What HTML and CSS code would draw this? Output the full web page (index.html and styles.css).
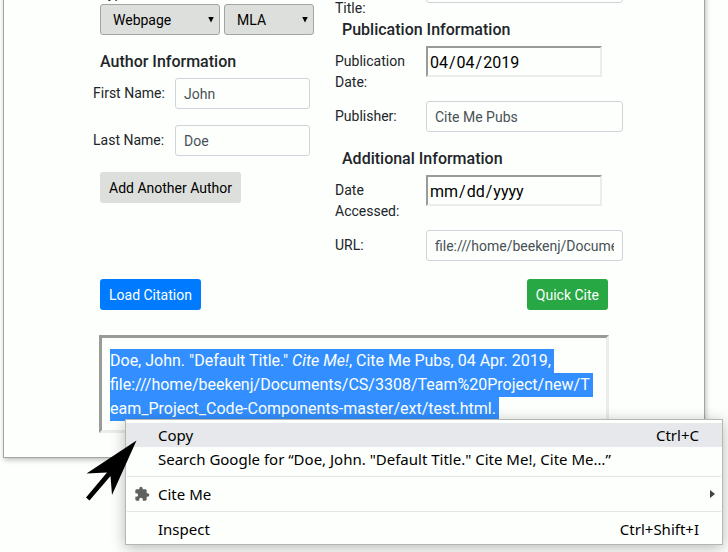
FILE: index.html
```html
<!DOCTYPE html>
<html lang="en">
<head>
<meta charset="utf-8">
<title>Cite Me</title>
<link rel="stylesheet" href="styles.css">
</head>
<body>
<main class="panel">
  <form class="columns">
    <section class="column column-author">
      <label class="type-label" for="type">Type:</label>
      <div class="selects">
        <span class="select select-type"><select id="type"><option>Webpage</option></select></span>
        <span class="select select-style"><select id="style" aria-label="Style"><option>MLA</option></select></span>
      </div>
      <h2 class="heading">Author Information</h2>
      <div class="row"><label for="first">First Name:</label><input class="field" id="first" type="text" value="John"></div>
      <div class="row"><label for="last">Last Name:</label><input class="field" id="last" type="text" value="Doe"></div>
      <button class="button button-light" type="button">Add Another Author</button>
    </section>
    <section class="column column-source">
      <div class="row"><label for="container">Container Title:</label><input class="field" id="container" type="text"></div>
      <h2 class="heading">Publication Information</h2>
      <div class="row row-date"><label for="published">Publication Date:</label><input class="date" id="published" type="date" value="2019-04-04"></div>
      <div class="row"><label for="publisher">Publisher:</label><input class="field" id="publisher" type="text" value="Cite Me Pubs"></div>
      <h2 class="heading">Additional Information</h2>
      <div class="row row-date"><label for="accessed">Date Accessed:</label><input class="date" id="accessed" type="date"></div>
      <div class="row"><label for="url">URL:</label><input class="field" id="url" type="text" value="file:///home/beekenj/Documents/CS/3308/Team%20Project/new/Team_Project_Code-Components-master/ext/test.html"></div>
    </section>
  </form>
  <div class="actions">
    <button class="button button-primary" type="button">Load Citation</button>
    <button class="button button-success" type="button">Quick Cite</button>
  </div>
  <div class="citation"><mark>Doe, John. "Default Title." <i>Cite Me!</i>, Cite Me Pubs, 04 Apr. 2019, file:///home/beekenj/Documents/CS/3308/Team%20Project/new/Team_Project_Code-Components-master/ext/test.html.</mark></div>
</main>

<div class="menu" role="menu">
  <button class="item item-active" type="button" role="menuitem"><span>Copy</span><span>Ctrl+C</span></button>
  <button class="item" type="button" role="menuitem"><span>Search Google for “Doe, John. "Default Title." Cite Me!, Cite Me…”</span></button>
  <hr>
  <button class="item item-icon" type="button" role="menuitem">
    <svg class="puzzle" viewBox="0 0 24 24" aria-hidden="true"><path d="M20.5 11H19V7c0-1.1-.9-2-2-2h-4V3.500a2.500 2.500 0 0 0-5 0V5H4c-1.100 0-2 .9-2 2v3.800h1.500a2.700 2.700 0 0 1 0 5.400H2V20c0 1.100.9 2 2 2h3.800v-1.500a2.700 2.700 0 0 1 5.400 0V22H17c1.100 0 2-.9 2-2v-4h1.500a2.500 2.500 0 0 0 0-5z"/></svg>
    <span>Cite Me</span>
    <svg class="submenu" viewBox="0 0 5 8" aria-hidden="true"><path d="M0 0l5 4-5 4z"/></svg>
  </button>
  <hr>
  <button class="item" type="button" role="menuitem"><span>Inspect</span><span>Ctrl+Shift+I</span></button>
</div>

<svg class="pointer" viewBox="0 0 52 62" aria-hidden="true"><path d="M50.500 0.500L0.500 33.500L21 32.500L0 57.500L3.500 60.500L24.500 36L26 55z"/></svg>
</body>
</html>
```
FILE: styles.css
```css
* { box-sizing: border-box; }

html { height: 100%; overflow: hidden; background: #fdfffc; }

body {
  margin: 0;
  height: 100%;
  overflow: hidden;
  position: relative;
  color: #212529;
  font: 14px/21px Roboto, "Liberation Sans", sans-serif;
}

button, input, select { font: inherit; margin: 0; }

.panel {
  margin: -28px 23px 0 3px;
  padding: 0 95px 24px 89px;
  border: 1px solid #a3a5a2;
  border-top: 0;
  box-shadow: 1px 2px 5px rgba(0, 0, 0, .25);
}

.columns {
  display: grid;
  grid-template-columns: minmax(0, 217fr) minmax(0, 288fr);
  column-gap: 25px;
  margin-right: -14px;
}

.column-author { padding-top: 11px; }

.type-label { display: block; margin-left: 7px; }

.selects { display: flex; gap: 4px; margin: 0 -4px 16px 7px; }

.select { display: grid; align-items: center; }
.select-type { flex: 4; }
.select-style { flex: 3; }

.select select {
  grid-area: 1 / 1;
  width: 100%;
  height: 31px;
  padding: 2px 12px 0;
  appearance: none;
  border: 1px solid #a3a5a2;
  border-radius: 3px;
  background: #dddfdc;
  color: #000;
}

.select::after {
  content: "";
  grid-area: 1 / 1;
  justify-self: end;
  width: 6px;
  height: 6px;
  margin-right: 6px;
  background: #000;
  clip-path: polygon(0 0, 100% 0, 50% 100%);
  pointer-events: none;
}

.heading {
  margin: 0 0 6px 7px;
  padding-top: 1px;
  font-size: 16px;
  line-height: 20px;
  font-weight: 500;
}

.row { display: flex; align-items: flex-start; min-height: 47px; }
.row-date { margin-bottom: 8px; }
.row label { flex: none; width: 82px; padding-top: 5px; }
.column-source .row label { width: 91px; padding-right: 16px; }

.field {
  flex: 1;
  min-width: 0;
  height: 31px;
  padding: 4px 8px;
  border: 1px solid #ced4da;
  border-radius: 3px;
  background: #fdfffc;
  color: #495057;
}

.date {
  width: 176px;
  height: 31px;
  padding: 2px 1px 0;
  border: 2px solid;
  border-color: #999b98 #ebedea #ebedea #999b98;
  background: #fdfffc;
  color: #000;
  font-size: 16px;
}
.date::-webkit-calendar-picker-indicator { display: none; }

.button {
  height: 31px;
  padding: 1px 9px 0;
  border: 0;
  border-radius: 3px;
  color: #fdfffc;
}
.button-light { margin-left: 7px; background: #dddfdc; color: #000; }
.button-primary { background: #007bff; }
.button-success { background: #28a745; }

.actions {
  display: flex;
  justify-content: space-between;
  margin: 2px 1px 25px 7px;
}

.citation {
  margin-left: 6px;
  padding: 11px 12px 9px 8px;
  border: 3px solid;
  border-color: #999b98 #ebedea #ebedea #999b98;
  font-size: 16px;
  line-height: 24px;
  overflow-wrap: anywhere;
}
.citation mark {
  padding: 2px 3px 3px 0;
  background: #338fff;
  color: #fdfffc;
  box-decoration-break: clone;
  -webkit-box-decoration-break: clone;
}

.menu {
  position: absolute;
  left: 125px;
  right: 5px;
  top: 419px;
  padding: 3px 0;
  border: 1px solid #b5b7b4;
  background: #fdfffc;
  box-shadow: 0 3px 14px rgba(0, 0, 0, .28);
}

.item {
  display: flex;
  justify-content: space-between;
  align-items: center;
  width: 100%;
  height: 24px;
  padding: 0 23px 0 32px;
  border: 0;
  background: none;
  color: #000;
  font: 15px/24px "Noto Sans", "Open Sans", sans-serif;
  white-space: nowrap;
}
.item-active { background: #e6e8ec; }
.item-icon { justify-content: flex-start; gap: 8px; padding: 0 7px 0 8px; }

.menu hr { margin: 5px 1px; border: 0; border-top: 1px solid #e3e5e6; }

.puzzle { width: 16px; height: 16px; fill: #606260; }
.submenu { width: 5px; height: 8px; margin-left: auto; fill: #404244; }

.pointer {
  position: absolute;
  left: 86px;
  top: 440px;
  width: 52px;
  height: 62px;
  fill: #000;
}
```
